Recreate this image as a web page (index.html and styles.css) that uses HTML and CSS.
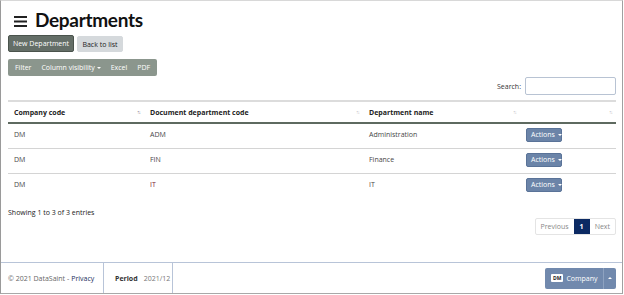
FILE: index.html
```html
<!DOCTYPE html>
<html>
<head>
<meta charset="utf-8">
<link rel="stylesheet" href="styles.css">
</head>
<body>
<div class="frame">
  <div class="main">
    <h1 class="title">
      <svg class="burger" width="13" height="11" viewBox="0 0 13 11"><rect x="0" y="0" width="13" height="2" fill="#222"/><rect x="0" y="4.5" width="13" height="2" fill="#222"/><rect x="0" y="9" width="13" height="2" fill="#222"/></svg>
      <span>Departments</span>
    </h1>
    <div class="actions-row">
      <button class="btn btn-dark">New Department</button>
      <button class="btn btn-light">Back to list</button>
    </div>
    <div class="toolbar">
      <span class="tb">Filter</span>
      <span class="tb">Column visibility <i class="caret-w"></i></span>
      <span class="tb">Excel</span>
      <span class="tb">PDF</span>
    </div>
    <div class="search-row">
      <label>Search:</label>
      <input class="search" type="text">
    </div>
    <table class="grid">
      <colgroup><col class="c1"><col class="c2"><col class="c3"><col class="c4"></colgroup>
      <thead>
        <tr>
          <th>Company code<span class="sort">↑↓</span></th>
          <th>Document department code<span class="sort">↑↓</span></th>
          <th>Department name<span class="sort">↑↓</span></th>
          <th><span class="sort">↑↓</span></th>
        </tr>
      </thead>
      <tbody>
        <tr><td>DM</td><td>ADM</td><td>Administration</td><td><button class="act">Actions <i class="caret-w"></i></button></td></tr>
        <tr><td>DM</td><td>FIN</td><td>Finance</td><td><button class="act">Actions <i class="caret-w"></i></button></td></tr>
        <tr><td>DM</td><td class="red">IT</td><td>IT</td><td><button class="act">Actions <i class="caret-w"></i></button></td></tr>
      </tbody>
    </table>
    <div class="info">Showing 1 to 3 of 3 entries</div>
    <div class="pager">
      <span class="pg disabled">Previous</span>
      <span class="pg active">1</span>
      <span class="pg disabled">Next</span>
    </div>
  </div>
  <footer class="footer">
    <div class="f-copy">© 2021 DataSaint - <a href="#">Privacy</a></div>
    <div class="f-period"><b>Period</b><span>2021/12</span></div>
    <div class="f-spacer"></div>
    <div class="company">
      <span class="cmain"><span class="dm">DM</span>Company</span>
      <span class="csplit"><i class="caret-up"></i></span>
    </div>
  </footer>
</div>
</body>
</html>
```
FILE: styles.css
```css
* { box-sizing: border-box; }
html, body { margin: 0; padding: 0; background: #fff; }
body { font-family: "Open Sans", "Noto Sans", sans-serif; font-size: 7px; color: #333; }
.frame {
  width: 623px; height: 294px;
  border-top: 1px solid #d8d8d8;
  border-left: 1px solid #9a9a9a;
  border-right: 1px solid #a0a0a0;
  border-bottom: 1px solid #a8a8a8;
  display: flex; flex-direction: column;
}
.main { flex: 1; padding: 0 6px 0 7px; display: flex; flex-direction: column; }
.title { margin: 8px 0 0 6px; display: flex; align-items: center; gap: 8px; font-family: Lato, "Open Sans", sans-serif; font-size: 19px; letter-spacing: -0.3px; font-weight: 700; color: #111; line-height: 22px; }
.burger { margin-top: 2px; }
.actions-row { display: flex; gap: 3px; margin-top: 4px; align-items: flex-start; }
.btn { font-family: inherit; font-size: 7px; border-radius: 2px; padding: 0; height: 17px; cursor: pointer; white-space: nowrap; }
.btn-dark { background: #646e67; color: #fff; border: 1px solid #4a534c; width: 66px; }
.btn-light { background: #d5d9dc; color: #222; border: 1px solid #d5d9dc; width: 46px; height: 16px; margin-top: 1px; }
.toolbar { display: flex; align-self: flex-start; margin-top: 7px; background: #8b968d; border-radius: 2px; height: 17px; align-items: center; padding: 0 2px; }
.tb { color: #fff; padding: 0 5px; display: flex; align-items: center; gap: 2px; white-space: nowrap; }
.caret-w { display: inline-block; width: 0; height: 0; border-left: 2.5px solid transparent; border-right: 2.5px solid transparent; border-top: 2.5px solid #fff; }
.search-row { display: flex; justify-content: flex-end; align-items: center; gap: 4px; margin-top: 1px; }
.search { width: 91px; height: 18px; border: 1px solid #b8c3d3; border-radius: 2px; }
.grid { width: 100%; border-collapse: collapse; margin-top: 5px; table-layout: fixed; }
.c1 { width: 136px; } .c2 { width: 219px; } .c3 { width: 157px; } .c4 { width: auto; }
.grid th { text-align: left; font-weight: 700; color: #222; height: 22px; padding: 0 6px; border-top: 2px solid #dcdcdc; border-bottom: 2px solid #5e6a60; position: relative; }
.sort { position: absolute; right: 4px; top: 7px; color: #bbb; font-weight: 400; font-size: 5px; letter-spacing: -1px; }
.grid th:first-child .sort { color: #777; }
.grid td { height: 25px; padding: 0 6px 2px; border-bottom: 1px solid #d4d4d4; color: #474747; }
.grid tbody tr:last-child td { border-bottom: none; }
.grid td.red { color: #7b2534; }
.act { font-family: inherit; font-size: 7px; background: #6b84a8; color: #fff; border: 1px solid #5a7398; border-radius: 2px; height: 14px; width: 36px; padding: 0 4px; display: flex; align-items: center; gap: 3px; margin-left: 0; }
.info { margin-top: 10px; color: #222; }
.pager { display: flex; align-self: flex-end; margin-top: 1px; border: 1px solid #e4e4e4; border-radius: 2px; height: 17px; }
.pg { display: flex; align-items: center; padding: 0 5px; color: #888; }
.pg.active { background: #0c2a63; color: #fff; width: 16px; justify-content: center; font-weight: 700; }
.footer { height: 31px; flex: none; border-top: 1px solid #b8c4d8; display: flex; align-items: stretch; }
.f-copy { width: 103px; border-right: 1px solid #b8c4d8; display: flex; align-items: center; padding-left: 7px; color: #666; white-space: nowrap; }
.f-copy a { color: #1c2e5c; text-decoration: none; margin-left: 2px; }
.f-period { width: 69px; border-right: 1px solid #b8c4d8; display: flex; align-items: center; padding-left: 11px; gap: 6px; color: #777; }
.f-period b { color: #333; }
.f-spacer { flex: 1; }
.company { display: flex; align-self: center; margin-right: 6px; height: 21px; background: #7189ad; border-radius: 2px; color: #fff; }
.cmain { display: flex; align-items: center; gap: 3px; padding: 0 6px; width: 59px; border-right: 1px solid #8ea2c0; }
.dm { background: #fff; color: #222; font-weight: 700; font-size: 5px; padding: 1px 2px; border-radius: 1px; }
.csplit { display: flex; align-items: center; justify-content: center; width: 12px; }
.caret-up { display: inline-block; width: 0; height: 0; border-left: 2px solid transparent; border-right: 2px solid transparent; border-bottom: 2px solid #fff; }
```
